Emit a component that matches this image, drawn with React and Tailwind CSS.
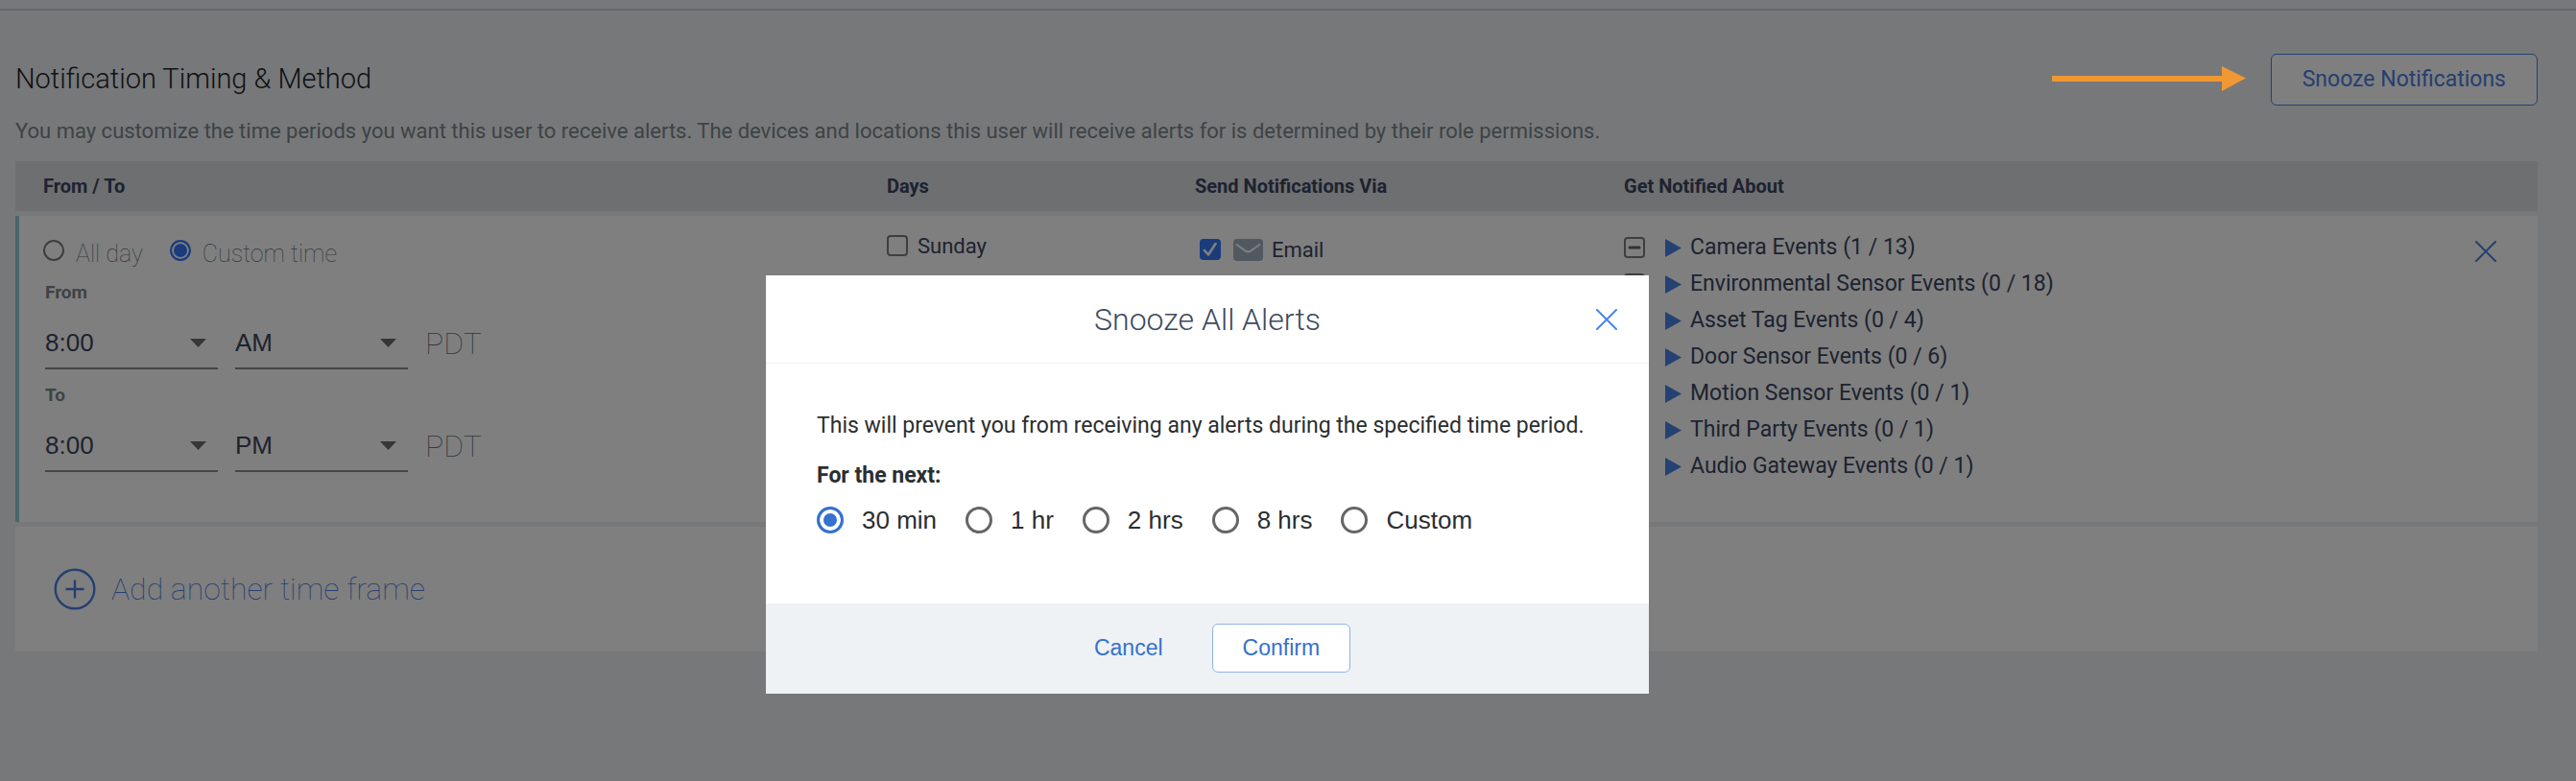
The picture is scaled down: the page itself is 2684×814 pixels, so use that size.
import React, { useState } from 'react';

const EVENTS = [
    { name: 'Camera Events', on: 1, total: 13 },
    { name: 'Environmental Sensor Events', on: 0, total: 18 },
    { name: 'Asset Tag Events', on: 0, total: 4 },
    { name: 'Door Sensor Events', on: 0, total: 6 },
    { name: 'Motion Sensor Events', on: 0, total: 1 },
    { name: 'Third Party Events', on: 0, total: 1 },
    { name: 'Audio Gateway Events', on: 0, total: 1 },
];

const DURATIONS = ['30 min', '1 hr', '2 hrs', '8 hrs', 'Custom'];

function CloseIcon() {
    return (
        <svg className="block size-[22px]" viewBox="0 0 22 22" fill="none" stroke="currentColor" strokeWidth="2" strokeLinecap="round">
            <path d="M1 1l20 20M21 1L1 21" />
        </svg>
    );
}

function Checkbox({ id, label, checked, partial }) {
    return (
        <span className="relative inline-flex size-[22px] shrink-0">
            <input
                id={id}
                type="checkbox"
                aria-label={label}
                defaultChecked={checked}
                ref={(el) => {
                    if (el) el.indeterminate = !!partial;
                }}
                className="size-[22px] appearance-none rounded-[4px] border-2 border-[#7c7c7c] bg-white checked:border-[#3478f6] checked:bg-[#3478f6]"
            />
            <svg className="pointer-events-none absolute inset-0" viewBox="0 0 22 22" fill="none" strokeLinecap="round" strokeLinejoin="round">
                {checked && <path d="M5 12l4 4.500L16.500 5" stroke="#fff" strokeWidth="2.600" />}
                {partial && <path d="M6 11h10" stroke="#666" strokeWidth="3" />}
            </svg>
        </span>
    );
}

function Dropdown({ label, value, options }) {
    return (
        <span className="relative block w-[180px]">
            <select
                aria-label={label}
                defaultValue={value}
                className="block h-[54px] w-full appearance-none border-b-2 border-[#8a8a8a] bg-transparent font-['Liberation_Sans',sans-serif] text-[26px] text-[#3a4660]"
            >
                {options.map((o) => (
                    <option key={o}>{o}</option>
                ))}
            </select>
            <svg className="pointer-events-none absolute top-[22px] right-3 h-[9px] w-[17px]" viewBox="0 0 17 9" fill="#6c6c6c">
                <path d="M0 0h17L8.500 9z" />
            </svg>
        </span>
    );
}

function TimeField({ label, period }) {
    return (
        <div>
            <div className="mb-[14px] text-[19px] leading-6 font-bold text-[#7a868c]">{label}</div>
            <div className="flex gap-[18px]">
                <Dropdown label={`${label} hour`} value="8:00" options={['7:00', '8:00', '9:00']} />
                <Dropdown label={`${label} period`} value={period} options={['AM', 'PM']} />
                <span className="text-[32px] leading-[54px] font-thin text-[#66727a]">PDT</span>
            </div>
        </div>
    );
}

function TimingRadio({ id, label, checked }) {
    return (
        <div className="flex items-start gap-3">
            <input
                id={id}
                type="radio"
                name="timing"
                defaultChecked={checked}
                className="mt-px size-[22px] appearance-none rounded-full border-2 border-[#7c7c7c] checked:border-[#3478f6] checked:bg-[#3478f6] checked:shadow-[inset_0_0_0_2px_#fff]"
            />
            <label htmlFor={id} className="text-[25px] leading-8 font-thin text-[#66727a]">
                {label}
            </label>
        </div>
    );
}

function EventRow({ event }) {
    return (
        <li className="flex h-[38px] items-center">
            <Checkbox label={event.name} partial={event.on > 0} />
            <button type="button" className="ml-[21px] flex items-center gap-[9px] text-[23px]">
                <svg className="h-[19px] w-[17px]" viewBox="0 0 17 19" fill="#4a82e6">
                    <path d="M0 0l17 9.500L0 19z" />
                </svg>
                {event.name} ({event.on} / {event.total})
            </button>
        </li>
    );
}

function SnoozeModal() {
    const [duration, setDuration] = useState('30 min');

    return (
        <div className="fixed inset-0 z-10 flex items-start justify-center bg-black/50 pt-[287px] pr-[168px]">
            <div role="dialog" aria-labelledby="snooze-title" className="w-[920px] bg-white text-[#2b2e30]">
                <div className="relative flex h-[92px] items-center justify-center border-b border-[#edf0f4]">
                    <h2 id="snooze-title" className="text-[32px] font-light text-[#3c4a60]">
                        Snooze All Alerts
                    </h2>
                    <button type="button" aria-label="Close" className="absolute right-[33px] text-[#4a86e8]">
                        <CloseIcon />
                    </button>
                </div>

                <div className="px-[53px] pt-[51px] pb-[73px] text-[23px] leading-7">
                    <p>This will prevent you from receiving any alerts during the specified time period.</p>
                    <p className="mt-6 font-bold">For the next:</p>
                    <div className="mt-[18px] flex gap-[30px] font-['Liberation_Sans',sans-serif] text-[26px]">
                        {DURATIONS.map((d) => (
                            <label key={d} className="flex items-center gap-[19px]">
                                <input
                                    type="radio"
                                    name="duration"
                                    checked={duration === d}
                                    onChange={() => setDuration(d)}
                                    className="size-7 appearance-none rounded-full border-3 border-[#666] checked:border-[#3571cd] checked:bg-[#3571cd] checked:shadow-[inset_0_0_0_4px_#fff]"
                                />
                                {d}
                            </label>
                        ))}
                    </div>
                </div>

                <div className="flex justify-center gap-5 bg-[#eef2f5] pt-[21px] pb-[22px] font-['Liberation_Sans',sans-serif] text-[23px] text-[#3571cd]">
                    <button type="button" className="h-[51px] px-[31px]">
                        Cancel
                    </button>
                    <button type="button" className="h-[51px] rounded-md border border-[#8fb4e8] bg-white px-[31px]">
                        Confirm
                    </button>
                </div>
            </div>
        </div>
    );
}

export default function App() {
    return (
        <div className="min-h-screen bg-[#eff1f4] font-[Roboto,sans-serif] text-[#3a4660]">
            <div className="h-[11px] border-b-2 border-[#c9d2d8]" />

            <main className="pt-[45px] pr-10 pl-4">
                <div className="flex items-center">
                    <h1 className="text-[29px] font-light text-[#222527]">Notification Timing &amp; Method</h1>
                    <svg className="relative z-20 mr-[26px] ml-auto h-7 w-[202px]" viewBox="0 0 202 28" fill="#f09833">
                        <path d="M0 10h177V0l25 12.500L177 26V16H0z" />
                    </svg>
                    <button type="button" className="h-[54px] rounded-md border border-[#4a7fe0] bg-white px-8 text-[23px] text-[#4a7fe0]">
                        Snooze Notifications
                    </button>
                </div>
                <p className="mt-[13px] text-[22px] leading-7 text-[#7a868c]">
                    You may customize the time periods you want this user to receive alerts. The devices and locations this user will receive alerts for is determined by their role permissions.
                </p>

                <table className="mt-3 w-full table-fixed border-separate border-spacing-x-0 border-spacing-y-[5px] text-left">
                    <thead>
                        <tr className="h-[52px] bg-[#dcdee3] text-xl">
                            <th className="w-[908px] pl-[29px]">From / To</th>
                            <th className="w-[321px]">Days</th>
                            <th className="w-[447px]">Send Notifications Via</th>
                            <th>Get Notified About</th>
                        </tr>
                    </thead>
                    <tbody>
                        <tr className="bg-white align-top">
                            <td className="border-l-4 border-[#94cbd8] pt-6 pb-[52px] pl-[27px]">
                                <div className="flex flex-col gap-[15px]">
                                    <div className="-ml-0.5 flex h-[29px] gap-7">
                                        <TimingRadio id="all-day" label="All day" />
                                        <TimingRadio id="custom-time" label="Custom time" checked />
                                    </div>
                                    <TimeField label="From" period="AM" />
                                    <TimeField label="To" period="PM" />
                                </div>
                            </td>
                            <td className="pt-3">
                                <div className="flex h-[38px] items-center gap-[10px] text-[22px]">
                                    <Checkbox id="sunday" />
                                    <label htmlFor="sunday">Sunday</label>
                                </div>
                            </td>
                            <td className="pt-4 pl-[5px]">
                                <div className="flex h-[38px] items-center text-[22px]">
                                    <Checkbox id="email" checked />
                                    <svg className="mr-[9px] ml-[13px] h-[23px] w-[31px]" viewBox="0 0 31 23">
                                        <rect width="31" height="23" rx="4" fill="#a0b2bf" />
                                        <path d="M3.500 6l9.500 6.600q2.500 1.600 5 0L27.500 6" fill="none" stroke="#fff" strokeWidth="2" strokeLinecap="round" />
                                    </svg>
                                    <label htmlFor="email">Email</label>
                                </div>
                            </td>
                            <td className="pt-[14px] pr-[43px]">
                                <div className="flex items-start justify-between">
                                    <ul>
                                        {EVENTS.map((event) => (
                                            <EventRow key={event.name} event={event} />
                                        ))}
                                    </ul>
                                    <button type="button" aria-label="Remove time frame" className="mt-3 text-[#4a7fe0]">
                                        <CloseIcon />
                                    </button>
                                </div>
                            </td>
                        </tr>
                        <tr className="bg-white">
                            <td colSpan={4} className="py-[43px] pl-10">
                                <button type="button" className="flex h-11 items-center gap-4 text-[32px] font-thin text-[#4a7fe0]">
                                    <svg className="size-11" viewBox="0 0 44 44" fill="none" stroke="currentColor" strokeWidth="2.400">
                                        <circle cx="22" cy="22" r="20.300" />
                                        <path d="M22 12.500v19M12.500 22h19" />
                                    </svg>
                                    Add another time frame
                                </button>
                            </td>
                        </tr>
                    </tbody>
                </table>
            </main>

            <SnoozeModal />
        </div>
    );
}
